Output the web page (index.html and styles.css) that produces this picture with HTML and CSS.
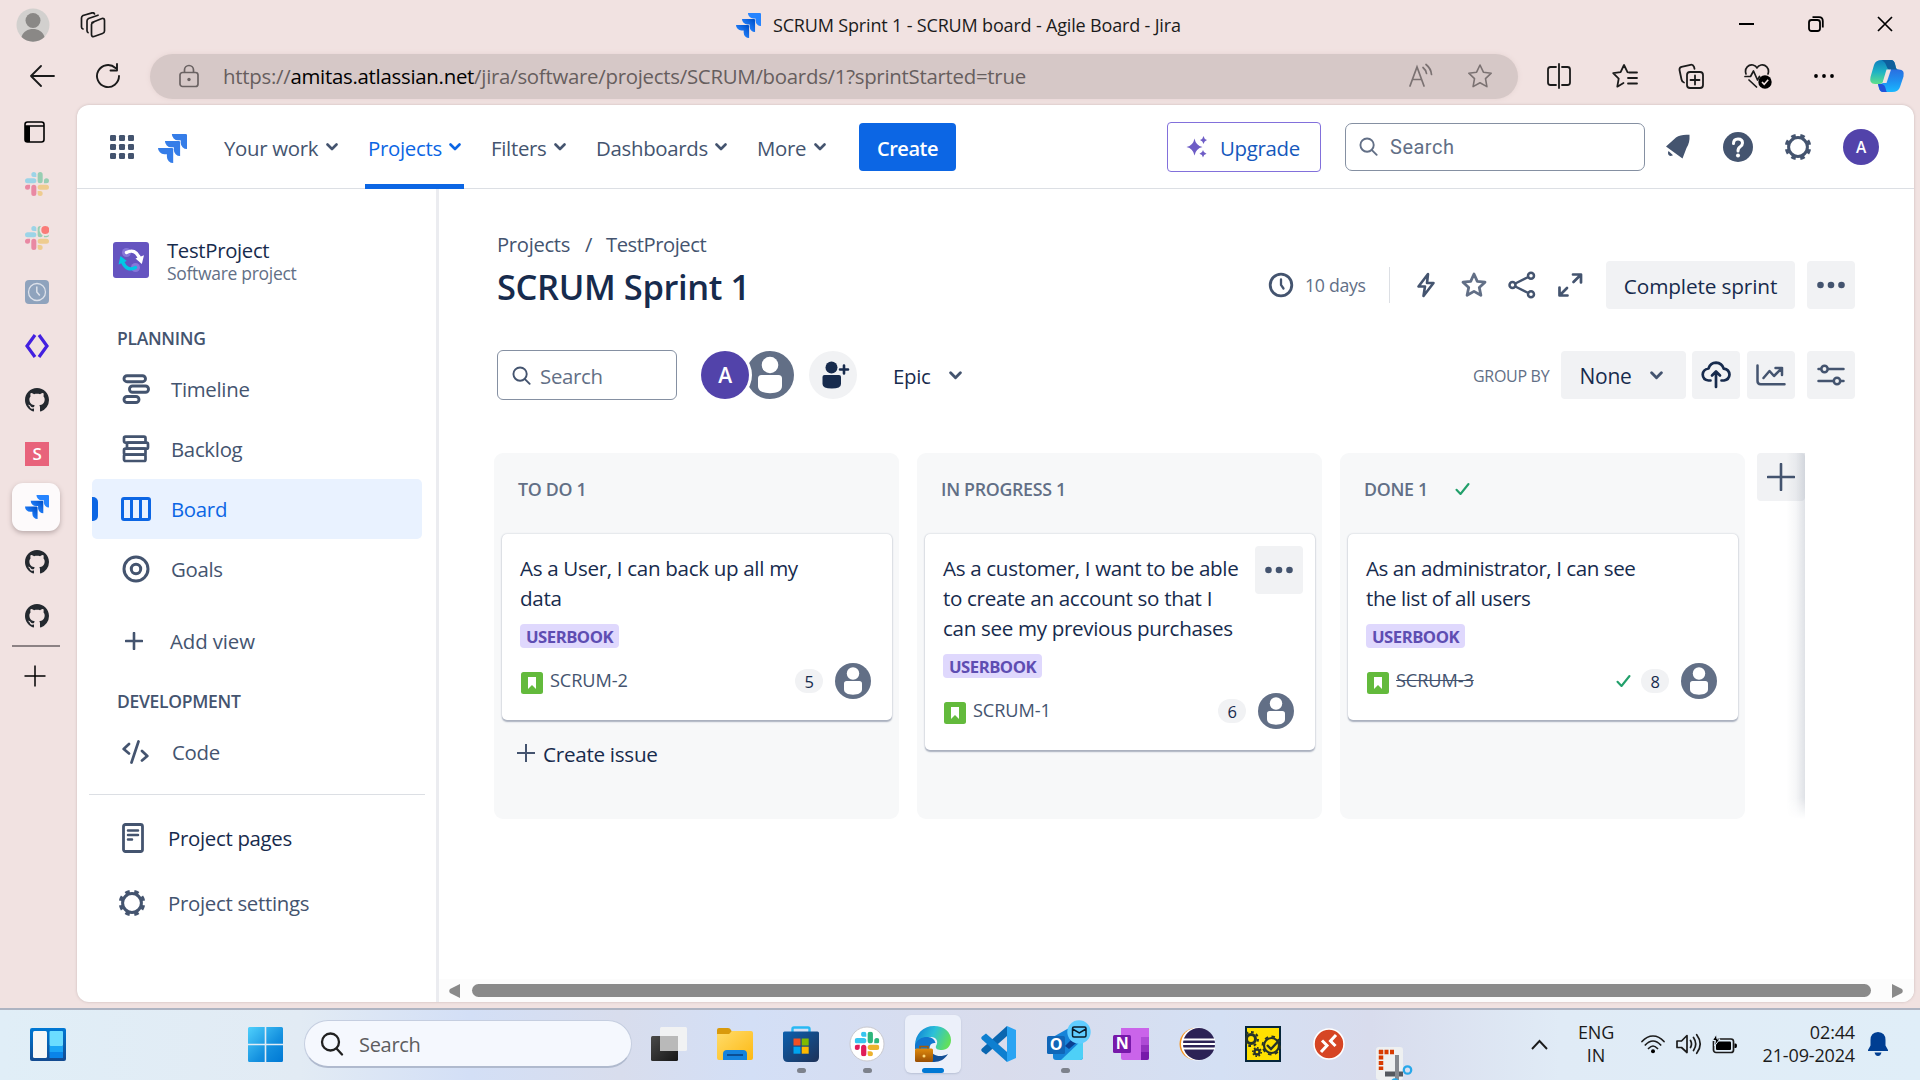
FILE: index.html
```html
<!DOCTYPE html>
<html lang="en">
<head>
<meta charset="utf-8">
<title>SCRUM Sprint 1 - SCRUM board - Agile Board - Jira</title>
<link rel="stylesheet" href="styles.css">
</head>
<body>
<svg class="defs" width="0" height="0" aria-hidden="true">
  <defs>
    <linearGradient id="gJira" x1="1" y1="0" x2="0" y2="1"><stop offset="0.3" stop-color="#2684ff"/><stop offset="1" stop-color="#2684ff"/></linearGradient>
    <linearGradient id="gJiraDark" x1="1" y1="0" x2="0" y2="1"><stop offset="0.1" stop-color="#0052cc"/><stop offset="0.7" stop-color="#2684ff"/></linearGradient>
    <linearGradient id="gWin" x1="0" y1="0" x2="1" y2="1"><stop offset="0" stop-color="#4fd0fc"/><stop offset="0.6" stop-color="#1490df"/><stop offset="1" stop-color="#0078d4"/></linearGradient>
    <linearGradient id="gCopA" x1="0" y1="0" x2="0" y2="1"><stop offset="0" stop-color="#0f7fbd"/><stop offset="0.5" stop-color="#1fb3c4"/><stop offset="1" stop-color="#5fe08a"/></linearGradient>
    <linearGradient id="gCopB" x1="0" y1="0" x2="0" y2="1"><stop offset="0" stop-color="#2a6fe0"/><stop offset="0.5" stop-color="#1f8ff0"/><stop offset="1" stop-color="#19b8ff"/></linearGradient>
    <linearGradient id="gFold" x1="0" y1="0" x2="1" y2="1"><stop offset="0" stop-color="#ffdc6b"/><stop offset="1" stop-color="#fdb913"/></linearGradient>
    <linearGradient id="gStore" x1="0" y1="0" x2="1" y2="1"><stop offset="0" stop-color="#0b5fae"/><stop offset="1" stop-color="#1f3258"/></linearGradient>
    <linearGradient id="gEdge" x1="0" y1="0.2" x2="1" y2="0.5"><stop offset="0" stop-color="#0f7fd6"/><stop offset="0.5" stop-color="#2cc0d8"/><stop offset="1" stop-color="#62e05a"/></linearGradient>
    <linearGradient id="gBag" x1="0" y1="0" x2="0" y2="1"><stop offset="0" stop-color="#e08a0c"/><stop offset="1" stop-color="#9a4f04"/></linearGradient>
    <linearGradient id="gDark" x1="0" y1="0" x2="1" y2="1"><stop offset="0" stop-color="#4a4a4a"/><stop offset="1" stop-color="#161616"/></linearGradient>
    <linearGradient id="gWidget" x1="0" y1="0" x2="0" y2="1"><stop offset="0" stop-color="#0078d4"/><stop offset="1" stop-color="#134a90"/></linearGradient>
  </defs>
  <symbol id="jira" viewBox="0 0 24 24">
    <path fill="url(#gJiraDark)" d="M11.571 11.513H0a5.218 5.218 0 0 0 5.232 5.215h2.13v2.057A5.215 5.215 0 0 0 12.575 24V12.518a1.005 1.005 0 0 0-1.005-1.005z"/>
    <path fill="url(#gJiraDark)" d="M17.294 5.757H5.736a5.215 5.215 0 0 0 5.215 5.214h2.129v2.058a5.218 5.218 0 0 0 5.215 5.214V6.758a1.001 1.001 0 0 0-1.001-1.001z"/>
    <path fill="url(#gJira)" d="M23.013 0H11.455a5.215 5.215 0 0 0 5.215 5.215h2.129v2.057A5.215 5.215 0 0 0 24 12.483V1.005A1.001 1.001 0 0 0 23.013 0Z"/>
  </symbol>
  <symbol id="jira-flat" viewBox="0 0 24 24">
    <path fill="#357de8" d="M11.571 11.513H0a5.218 5.218 0 0 0 5.232 5.215h2.13v2.057A5.215 5.215 0 0 0 12.575 24V12.518a1.005 1.005 0 0 0-1.005-1.005zm5.723-5.756H5.736a5.215 5.215 0 0 0 5.215 5.214h2.129v2.058a5.218 5.218 0 0 0 5.215 5.214V6.758a1.001 1.001 0 0 0-1.001-1.001zM23.013 0H11.455a5.215 5.215 0 0 0 5.215 5.215h2.129v2.057A5.215 5.215 0 0 0 24 12.483V1.005A1.001 1.001 0 0 0 23.013 0Z"/>
  </symbol>
  <symbol id="slack" viewBox="0 0 24 24">
    <path fill="#e01e5a" d="M5.042 15.165a2.528 2.528 0 0 1-2.52 2.523A2.528 2.528 0 0 1 0 15.165a2.527 2.527 0 0 1 2.522-2.52h2.52v2.52zM6.313 15.165a2.527 2.527 0 0 1 2.521-2.52 2.527 2.527 0 0 1 2.521 2.52v6.313A2.528 2.528 0 0 1 8.834 24a2.528 2.528 0 0 1-2.521-2.522v-6.313z"/>
    <path fill="#36c5f0" d="M8.834 5.042a2.528 2.528 0 0 1-2.521-2.52A2.528 2.528 0 0 1 8.834 0a2.528 2.528 0 0 1 2.521 2.522v2.52H8.834zM8.834 6.313a2.528 2.528 0 0 1 2.521 2.521 2.528 2.528 0 0 1-2.521 2.521H2.522A2.528 2.528 0 0 1 0 8.834a2.528 2.528 0 0 1 2.522-2.521h6.312z"/>
    <path fill="#2eb67d" d="M18.956 8.834a2.528 2.528 0 0 1 2.522-2.521A2.528 2.528 0 0 1 24 8.834a2.528 2.528 0 0 1-2.522 2.521h-2.522V8.834zM17.688 8.834a2.528 2.528 0 0 1-2.523 2.521 2.527 2.527 0 0 1-2.52-2.521V2.522A2.527 2.527 0 0 1 15.165 0a2.528 2.528 0 0 1 2.523 2.522v6.312z"/>
    <path fill="#ecb22e" d="M15.165 18.956a2.528 2.528 0 0 1 2.523 2.522A2.528 2.528 0 0 1 15.165 24a2.527 2.527 0 0 1-2.52-2.522v-2.522h2.52zM15.165 17.688a2.527 2.527 0 0 1-2.52-2.523 2.526 2.526 0 0 1 2.52-2.52h6.313A2.527 2.527 0 0 1 24 15.165a2.528 2.528 0 0 1-2.522 2.523h-6.313z"/>
  </symbol>
  <symbol id="github" viewBox="0 0 16 16">
    <path fill="#24292f" d="M8 0C3.58 0 0 3.58 0 8c0 3.54 2.29 6.53 5.47 7.59.4.07.55-.17.55-.38 0-.19-.01-.82-.01-1.49-2.01.37-2.53-.49-2.69-.94-.09-.23-.48-.94-.82-1.13-.28-.15-.68-.52-.01-.53.63-.01 1.08.58 1.23.82.72 1.21 1.87.87 2.33.66.07-.52.28-.87.51-1.07-1.78-.2-3.64-.89-3.64-3.95 0-.87.31-1.59.82-2.15-.08-.2-.36-1.02.08-2.12 0 0 .67-.21 2.2.82.64-.18 1.32-.27 2-.27s1.36.09 2 .27c1.53-1.04 2.2-.82 2.2-.82.44 1.1.16 1.92.08 2.12.51.56.82 1.27.82 2.15 0 3.07-1.87 3.75-3.65 3.95.29.25.54.73.54 1.48 0 1.07-.01 1.93-.01 2.2 0 .21.15.46.55.38A8.01 8.01 0 0 0 16 8c0-4.42-3.58-8-8-8z"/>
  </symbol>
  <symbol id="chev" viewBox="0 0 12 8"><path d="M1.5 1.5 6 6l4.5-4.5" fill="none" stroke="currentColor" stroke-width="2.6" stroke-linecap="round" stroke-linejoin="round"/></symbol>
  <symbol id="search" viewBox="0 0 20 20"><g fill="none" stroke="currentColor" stroke-width="2" stroke-linecap="round"><circle cx="8.5" cy="8.5" r="7"/><path d="m13.6 13.8 5 5"/></g></symbol>
  <symbol id="gear" viewBox="0 0 28 28"><g fill="none" stroke="currentColor"><circle cx="14" cy="14" r="9.4" stroke-width="3"/><circle cx="14" cy="14" r="11.8" stroke-width="3" pathLength="80" stroke-dasharray="5 5" transform="rotate(11.25 14 14)"/></g></symbol>
  <symbol id="person" viewBox="0 0 48 48"><circle cx="24" cy="24" r="24" fill="#626f86"/><circle cx="24" cy="14" r="8.3" fill="#fff"/><path d="M12 27.5a3.5 3.5 0 0 1 3.5-3.5h17a3.5 3.5 0 0 1 3.5 3.5V35c0 5-5 7.200-12 7.200S12 40 12 35z" fill="#fff"/></symbol>
  <symbol id="dots" viewBox="0 0 28 8"><g fill="currentColor"><circle cx="3.500" cy="4" r="3.300"/><circle cx="14" cy="4" r="3.300"/><circle cx="24.500" cy="4" r="3.300"/></g></symbol>
  <symbol id="check" viewBox="0 0 16 14"><path d="m2 7.800 4 4.200 8-10" fill="none" stroke="#22a06b" stroke-width="2.100" stroke-linecap="round" stroke-linejoin="round"/></symbol>
  <symbol id="story" viewBox="0 0 22 22"><rect width="22" height="22" rx="2.500" fill="#63ba3c"/><path d="M7 5h8v12l-4-4-4 4z" fill="#fff"/></symbol>
</svg>

<div class="titlebar">
  <svg class="user" width="34" height="34" viewBox="0 0 34 34"><circle cx="17" cy="17" r="16.500" fill="#d2d0ce"/><circle cx="17" cy="12.500" r="7.500" fill="#8a8886"/><path d="M5.500 29C7 23.500 12 21 17 21s10 2.500 11.500 8A16.500 16.500 0 0 1 5.500 29z" fill="#8a8886"/></svg>
  <svg class="workspaces" width="26" height="26" viewBox="0 0 26 26"><g fill="none" stroke="#1b1b1b" stroke-width="1.700" stroke-linejoin="round" stroke-linecap="round"><path d="M12 10.500 22 6.500q2.500-.5 2.500 2V19q0 2-2 2.500L14 24.500q-2.500.5-2.500-2V12.500q0-1.500 2-2z"/><path d="M8 20.500q-1-.5-1-2V9q0-1.500 1.500-2.500L18 3.200"/><path d="M3 17q-1.500-.5-1.500-2V6q0-1.500 1.500-2.500L12 .9q2-.5 2.500 1"/></g></svg>
  <div class="title"><svg width="25" height="25"><use href="#jira"/></svg><span>SCRUM Sprint 1 - SCRUM board - Agile Board - Jira</span></div>
  <div class="winctl">
    <svg width="16" height="16" viewBox="0 0 16 16"><path d="M0 8h15" stroke="#000" stroke-width="2"/></svg>
    <svg width="16" height="16" viewBox="0 0 16 16"><g fill="none" stroke="#000" stroke-width="1.800"><rect x="1" y="4" width="11" height="11" rx="2.500"/><path d="M4.500 1.200H11Q14.800 1.200 14.800 5v6.500"/></g></svg>
    <svg width="16" height="16" viewBox="0 0 16 16"><path d="m1 1 14 14M15 1 1 15" stroke="#000" stroke-width="1.700"/></svg>
  </div>
</div>

<div class="addressbar">
  <svg class="back" width="26" height="22" viewBox="0 0 26 22"><path d="M25 11H2M12 1 2 11l10 10" fill="none" stroke="#1b1b1b" stroke-width="1.800" stroke-linecap="round" stroke-linejoin="round"/></svg>
  <svg class="reload" width="26" height="26" viewBox="0 0 26 26"><path d="M24 13a11 11 0 1 1-3.500-8M22 1v6.500h-6.500" fill="none" stroke="#1b1b1b" stroke-width="1.900" stroke-linecap="round" stroke-linejoin="round"/></svg>
  <div class="omnibox">
    <svg class="lock" width="20" height="24" viewBox="0 0 20 24"><g fill="none" stroke="#6b6363" stroke-width="1.700"><rect x="1" y="8.500" width="18" height="14" rx="2.500"/><path d="M5.500 8.500V6a4.500 4.500 0 0 1 9 0v2.500"/></g><circle cx="10" cy="15.500" r="1.700" fill="#6b6363"/></svg>
    <span class="url">https://<b>amitas.atlassian.net</b>/jira/software/projects/SCRUM/boards/1?sprintStarted=true</span>
    <svg class="aloud" width="26" height="26" viewBox="0 0 26 26"><g fill="none" stroke="#7b7272" stroke-width="1.700" stroke-linecap="round"><path d="M2 23 9 4l7 19M4.500 16.500h9"/><path d="M15 4.500q3 2.500 3.500 6M18 1.500q5 4 5.500 10"/></g></svg>
    <svg class="fav" width="26" height="26" viewBox="0 0 26 26"><path d="m13 2 3.400 7.200 7.800 1-5.700 5.500 1.400 7.900L13 19.800l-6.900 3.800 1.400-7.900-5.700-5.500 7.800-1z" fill="none" stroke="#7b7272" stroke-width="1.600" stroke-linejoin="round"/></svg>
  </div>
  <div class="tools">
    <svg width="26" height="26" viewBox="0 0 26 26"><g fill="none" stroke="#1b1b1b" stroke-width="1.800" stroke-linecap="round"><path d="M10 4H4.500Q2 4 2 6.500v13Q2 22 4.500 22H10M16 4h5.500Q24 4 24 6.500v13q0 2.500-2.500 2.500H16M13 1v24"/></g></svg>
    <svg width="26" height="26" viewBox="0 0 26 26"><g fill="none" stroke="#1b1b1b" stroke-width="1.800" stroke-linecap="round" stroke-linejoin="round"><path d="M15.500 9.200 12 2 8.600 9.200l-7.400 1 5.500 5.500-1.400 8L11.500 20M17 9.500h8M16 15h9M16 20.500h9"/></g></svg>
    <svg width="26" height="26" viewBox="0 0 26 26"><g fill="none" stroke="#1b1b1b" stroke-width="1.800" stroke-linecap="round" stroke-linejoin="round"><rect x="9" y="9" width="16" height="16" rx="3"/><path d="M17 12.500v9M12.500 17h9M6 19.500q-2-.5-2.500-3L1.500 7q-.3-2.500 2-3.200l9-2q2.500-.5 3.500 2l.5 2"/></g></svg>
    <svg width="28" height="26" viewBox="0 0 28 26"><g fill="none" stroke="#1b1b1b" stroke-width="1.700" stroke-linecap="round" stroke-linejoin="round"><path d="M2 11C0 5 5 1 9 2q3 .7 4 3 1-2.300 4-3c4-1 9 3 7 9M1 13.500h5.500l3-5.500 4 9 2-3.500M5 17l7.500 7"/></g><circle cx="21" cy="19" r="6.700"/><path d="m18 19 2.200 2.300 4-4.500" fill="none" stroke="#f1e2e1" stroke-width="1.600"/></svg>
    <svg width="22" height="6" viewBox="0 0 22 6"><circle cx="3" cy="3" r="1.900"/><circle cx="11" cy="3" r="1.900"/><circle cx="19" cy="3" r="1.900"/></svg>
    <svg width="36" height="34" viewBox="0 0 36 34"><path d="M13 1h9q3 0 4 4l1 4q.600 2 3 2h-9q-2.500 0-3.500 3l-3 8q-1 3-4 3H6q-6 0-4.500-7L5 6q1.500-5 8-5z" fill="url(#gCopA)"/><path d="M13 1h9q3 0 4 4l1 4q.600 2 3 2h-9q-2.500-.5-3.500-4T13 1z" fill="#0e5f9c"/><path d="M23 33h-9q-3 0-4-4l-1-4h3q2 0 3-3l3.500-9q1-2.500 3.500-2.500h8q6 0 4.500 7L31 28q-1.500 5-8 5z" fill="url(#gCopB)"/><path d="M18 33h-4q-3 0-4-4l-1-4h4q3 1 3.500 4t1.500 4z" fill="#2352d8"/><path d="M17.500 10.500h4.500l-4.500 13.500h-4z" fill="#f1e2e1"/></svg>
  </div>
</div>

<div class="middle">
  <div class="tabs">
    <div class="tab top"><svg width="21" height="22" viewBox="0 0 21 22"><rect x="1" y="1" width="19" height="20" rx="2.500" fill="none" stroke="#000" stroke-width="1.600"/><path d="M1 5h5v16H3q-2 0-2-2zM1 4.300h19v1.400H1z"/></svg></div>
    <div class="tab"><svg class="dim" width="24" height="24"><use href="#slack"/></svg></div>
    <div class="tab"><svg width="24" height="24"><use class="dim" href="#slack"/><circle cx="20.500" cy="4" r="6" fill="#f1e2e1"/><circle cx="20.300" cy="4" r="4" fill="#fa7b78"/></svg></div>
    <div class="tab"><svg width="24" height="24" viewBox="0 0 24 24"><rect width="24" height="24" rx="4" fill="#8fa3bd"/><circle cx="12" cy="12" r="8.500" fill="none" stroke="#dde1ea" stroke-width="1.300"/><path d="M11.800 6.500V12l3 3.500" fill="none" stroke="#dde1ea" stroke-width="1.500"/></svg></div>
    <div class="tab"><svg width="24" height="24" viewBox="0 0 24 24"><path d="M10 1 2 12l8 11M14 1l8 11-8 11" fill="none" stroke="#4320e0" stroke-width="3.200"/></svg></div>
    <div class="tab"><svg width="24" height="24"><use href="#github"/></svg></div>
    <div class="tab"><span class="s-tile">S</span></div>
    <div class="tab"><span class="active-tile"><svg width="24" height="24"><use href="#jira"/></svg></span></div>
    <div class="tab"><svg width="24" height="24"><use href="#github"/></svg></div>
    <div class="tab"><svg width="24" height="24"><use href="#github"/></svg></div>
    <div class="tabs-line"></div>
    <svg class="newtab" width="22" height="22" viewBox="0 0 22 22"><path d="M11 .5v21M.5 11h21" stroke="#000" stroke-width="1.500"/></svg>
  </div>

  <div class="page">
    <header class="nav">
      <svg class="grid" width="24" height="24" viewBox="0 0 24 24"><g fill="#44546f"><rect width="6" height="6" rx="1.300"/><rect x="9" width="6" height="6" rx="1.300"/><rect x="18" width="6" height="6" rx="1.300"/><rect y="9" width="6" height="6" rx="1.300"/><rect x="9" y="9" width="6" height="6" rx="1.300"/><rect x="18" y="9" width="6" height="6" rx="1.300"/><rect y="18" width="6" height="6" rx="1.300"/><rect x="9" y="18" width="6" height="6" rx="1.300"/><rect x="18" y="18" width="6" height="6" rx="1.300"/></g></svg>
      <svg class="logo" width="29" height="29"><use href="#jira-flat"/></svg>
      <nav class="menu">
        <a class="w1">Your work<svg width="12" height="8"><use href="#chev"/></svg></a>
        <a class="w2 current">Projects<svg width="12" height="8"><use href="#chev"/></svg></a>
        <a class="w3">Filters<svg width="12" height="8"><use href="#chev"/></svg></a>
        <a class="w4">Dashboards<svg width="12" height="8"><use href="#chev"/></svg></a>
        <a class="w5">More<svg width="12" height="8"><use href="#chev"/></svg></a>
      </nav>
      <button class="create">Create</button>
      <div class="nav-right">
        <button class="upgrade"><svg width="22" height="22" viewBox="0 0 22 22"><g fill="#6e5dc6"><path d="M8.500 2.500q1.300 7 8 8.500-6.700 1.500-8 8.500Q7.200 12.500.5 11q6.700-1.500 8-8.500z"/><path d="M17.500 0q.6 3.200 3.500 4-2.900.8-3.500 4-.6-3.200-3.500-4 2.900-.8 3.500-4zM17 14q.5 3 3.500 3.700-3 .8-3.500 3.800-.5-3-3.500-3.800 3-.7 3.500-3.700z"/></g></svg>Upgrade</button>
        <div class="searchbox"><svg width="19" height="19"><use href="#search"/></svg>Search</div>
        <svg class="bell" width="26" height="26" viewBox="0 0 26 26"><path d="M11 3.500Q16 0 24.500.8 25 9 21.500 14L17.500 24.500 1 12.500z" fill="#44546f"/><path d="m3.500 17 4.500 4.200Q4.500 23 3.300 20.500 2.500 18.500 3.500 17z" fill="#44546f"/></svg>
        <svg class="help" width="30" height="30" viewBox="0 0 30 30"><circle cx="15" cy="15" r="15" fill="#44546f"/><path d="M10.500 11.500Q10.500 7 15 7t4.500 4q0 2.300-2.300 3.700Q15 16 15 19" fill="none" stroke="#fff" stroke-width="3" stroke-linecap="round"/><circle cx="15" cy="23.500" r="2" fill="#fff"/></svg>
        <svg class="cog" width="28" height="28"><use href="#gear"/></svg>
        <span class="avatar small">A</span>
      </div>
    </header>

    <div class="body">
      <aside class="side">
        <div class="project">
          <svg width="36" height="36" viewBox="0 0 36 36"><rect width="36" height="36" rx="3" fill="#6554c0"/><circle cx="13.500" cy="10.500" r="4.500" fill="#8777d9"/><circle cx="22.500" cy="25.500" r="4.500" fill="#8777d9"/><path d="M13.500 10.500Q22 6 26.500 16" fill="none" stroke="#fff" stroke-width="3.400" stroke-linecap="round"/><path d="m22.500 16.500 8.500-3.200-2.200 8.700z" fill="#fff"/><path d="M22.500 25.500Q14 30 9.500 20" fill="none" stroke="#00c7e6" stroke-width="3.400" stroke-linecap="round"/><path d="M13.800 19 5.500 22.500 7.500 14z" fill="#00c7e6"/></svg>
          <div class="names"><strong>TestProject</strong><span>Software project</span></div>
        </div>
        <h4>PLANNING</h4>
        <a class="row"><svg width="28" height="30" viewBox="0 0 28 30"><g fill="none" stroke="#44546f" stroke-width="2.900"><rect x="2" y="1.700" width="21.500" height="6" rx="3"/><rect x="7.500" y="12" width="19" height="6.300" rx="3"/><rect x="2" y="22.500" width="15" height="6" rx="3"/></g></svg>Timeline</a>
        <a class="row"><svg width="28" height="28" viewBox="0 0 28 28"><g fill="none" stroke="#44546f" stroke-width="2.700"><rect x="2" y="1.700" width="21.500" height="6" rx="1.500"/><rect x="5" y="7.700" width="21" height="6" rx="1.500"/><rect x="2" y="13.700" width="21.500" height="6" rx="1.500"/><rect x="2" y="19.700" width="21.500" height="6.300" rx="1.500"/></g></svg>Backlog</a>
        <a class="row selected"><svg width="30" height="24" viewBox="0 0 30 24"><g fill="none" stroke="#0c66e4" stroke-width="3"><rect x="1.500" y="1.500" width="27" height="21" rx="1.500"/><path d="M10.500 1v22M19.500 1v22"/></g></svg>Board</a>
        <a class="row"><svg width="28" height="28" viewBox="0 0 28 28"><g fill="none" stroke="#44546f" stroke-width="3"><circle cx="14" cy="14" r="12"/><circle cx="14" cy="14" r="4.700"/></g></svg>Goals</a>
        <a class="row add"><svg width="18" height="18" viewBox="0 0 18 18"><path d="M9 1v16M1 9h16" stroke="#44546f" stroke-width="2.600" stroke-linecap="round"/></svg>Add view</a>
        <h4 class="dev">DEVELOPMENT</h4>
        <a class="row code"><svg width="27" height="24" viewBox="0 0 27 24"><g fill="none" stroke="#44546f" stroke-width="2.700" stroke-linecap="round" stroke-linejoin="round"><path d="M7 4 1.700 9 7 13.500M20 11l5.300 5L20 20.500M16.500 1.500 9.500 22.500"/></g></svg>Code</a>
        <div class="side-line"></div>
        <a class="row pages"><svg width="22" height="30" viewBox="0 0 22 30"><rect x="1.500" y="1.500" width="19" height="27" rx="2" fill="none" stroke="#44546f" stroke-width="2.800"/><path d="M6 7.500h10M6 12h10M6 16.500h4" stroke="#44546f" stroke-width="2.500" stroke-linecap="round"/></svg>Project pages</a>
        <a class="row settings"><svg width="28" height="28"><use href="#gear"/></svg>Project settings</a>
      </aside>

      <main class="main">
        <div class="crumbs"><span class="c1">Projects</span><span class="c2">/</span><span>TestProject</span></div>
        <div class="headrow">
          <h1>SCRUM Sprint 1</h1>
          <div class="actions">
            <svg width="26" height="26" viewBox="0 0 26 26"><g fill="none" stroke="#44546f" stroke-width="2.800" stroke-linecap="round"><circle cx="13" cy="13" r="10.800"/><path d="M13 7.500V13l2.500 3.500" stroke-width="2.300"/></g></svg>
            <span class="days">10 days</span>
            <i class="vline"></i>
            <svg class="a1" width="20" height="26" viewBox="0 0 20 26"><path d="M12 2 2.500 14.500H9L7.500 24 17.500 11H11z" fill="none" stroke="#44546f" stroke-width="2.600" stroke-linejoin="round"/></svg>
            <svg class="a2" width="28" height="28" viewBox="0 0 28 28"><path d="m14 3 3.300 7.300 7.700.9-5.700 5.300 1.600 7.800L14 20.400l-6.900 3.900 1.600-7.800L3 11.200l7.700-.9z" fill="none" stroke="#626f86" stroke-width="2.800" stroke-linejoin="round"/></svg>
            <svg class="a3" width="28" height="28" viewBox="0 0 28 28"><g fill="none" stroke="#44546f" stroke-width="2.500"><circle cx="4.500" cy="14" r="3"/><circle cx="23" cy="4.800" r="3"/><circle cx="23" cy="23.200" r="3"/><path d="m7.300 12.500 13-6.500M7.300 15.500l13 6.500"/></g></svg>
            <svg class="a4" width="26" height="26" viewBox="0 0 26 26"><g fill="none" stroke="#44546f" stroke-width="2.700" stroke-linecap="round" stroke-linejoin="round"><path d="M16 2.500h8v8M23 3.500 16.500 10M10.500 23.500h-8v-8M3.500 22.500 10 16"/></g></svg>
            <button class="btn complete">Complete sprint</button>
            <button class="btn sq dk2"><svg width="28" height="8"><use href="#dots"/></svg></button>
          </div>
        </div>
        <div class="filters">
          <div class="fsearch"><svg width="19" height="19"><use href="#search"/></svg>Search</div>
          <div class="people">
            <span class="avatar big">A</span>
            <svg class="p2" width="48" height="48"><use href="#person"/></svg>
            <svg class="p3" width="48" height="48" viewBox="0 0 48 48"><circle cx="24" cy="24" r="24" fill="#f1f2f4"/><g fill="#172b4d"><circle cx="22.500" cy="16.500" r="6"/><path d="M13.500 26q0-2 2-2H30q2 0 2 2v7q0 4.500-9.200 4.500T13.500 33z"/></g><path d="M35 14.500v8M31 18.500h8" stroke="#172b4d" stroke-width="2.600" stroke-linecap="round"/></svg>
          </div>
          <span class="epic">Epic</span><svg class="epic-c" width="13" height="9"><use href="#chev"/></svg>
          <div class="fright">
            <span class="group">GROUP BY</span>
            <button class="btn none">None<svg width="13" height="9"><use href="#chev"/></svg></button>
            <button class="btn sq m1"><svg width="30" height="28" viewBox="0 0 30 28"><path d="M9.500 19.500H7.500Q2 19 1.700 13.500 2 8.500 7.500 7.500 9.500 1.700 15 1.700q6 .3 7.700 6 5.500.8 5.800 6-.3 5-5.500 5.800h-2.500M15 26V11M11 14.500l4-4 4 4" fill="none" stroke="#172b4d" stroke-width="2.700" stroke-linecap="round" stroke-linejoin="round"/></svg></button>
            <button class="btn sq m2"><svg width="30" height="22" viewBox="0 0 30 22"><path d="M1.500 1.500V17q0 3.200 3.200 3.200H28.500M7.500 14l6-7 4.500 5 8-8M19.500 4h6.500v7" fill="none" stroke="#44546f" stroke-width="2.500" stroke-linecap="round" stroke-linejoin="round"/></svg></button>
            <button class="btn sq m3"><svg width="28" height="22" viewBox="0 0 28 22"><g fill="none" stroke="#44546f" stroke-width="2.500" stroke-linecap="round"><path d="M1.500 5H4M11 5h15.500M1.500 17H16.500M23.500 17h3"/><circle cx="7.500" cy="5" r="3.200"/><circle cx="20" cy="17" r="3.200"/></g></svg></button>
          </div>
        </div>

        <div class="board">
          <section class="col">
            <h3>TO DO 1</h3>
            <article class="card">
              <p>As a User, I can back up all my<br>data</p>
              <span class="tag">USERBOOK</span>
              <div class="foot"><svg class="st" width="22" height="22"><use href="#story"/></svg><span class="key">SCRUM-2</span><span class="pts">5</span><svg width="36" height="36"><use href="#person"/></svg></div>
            </article>
            <div class="newissue"><svg width="18" height="18" viewBox="0 0 18 18"><path d="M9 0v18M0 9h18" stroke="#44546f" stroke-width="2"/></svg>Create issue</div>
          </section>
          <section class="col">
            <h3>IN PROGRESS 1</h3>
            <article class="card">
              <button class="btn sq more"><svg width="28" height="8"><use href="#dots"/></svg></button>
              <p>As a customer, I want to be able<br>to create an account so that I<br>can see my previous purchases</p>
              <span class="tag">USERBOOK</span>
              <div class="foot"><svg class="st" width="22" height="22"><use href="#story"/></svg><span class="key">SCRUM-1</span><span class="pts">6</span><svg width="36" height="36"><use href="#person"/></svg></div>
            </article>
          </section>
          <section class="col">
            <h3>DONE 1<svg width="17" height="14"><use href="#check"/></svg></h3>
            <article class="card">
              <p class="tight">As an administrator, I can see<br>the list of all users</p>
              <span class="tag">USERBOOK</span>
              <div class="foot"><svg class="st" width="22" height="22"><use href="#story"/></svg><span class="key done">SCRUM-3</span><svg class="ok" width="17" height="14"><use href="#check"/></svg><span class="pts">8</span><svg width="36" height="36"><use href="#person"/></svg></div>
            </article>
          </section>
          <button class="btn sq addcol"><svg width="28" height="28" viewBox="0 0 28 28"><path d="M14 1v26M1 14h26" stroke="#44546f" stroke-width="2.600" stroke-linecap="round"/></svg></button>
          <div class="fade"></div>
        </div>

        <div class="scroll">
          <svg width="11" height="14" viewBox="0 0 11 14"><path d="M11 0v14L1 9Q-.5 7 1 5z" fill="#8a8a8a"/></svg>
          <div class="thumb"></div>
          <svg width="11" height="14" viewBox="0 0 11 14"><path d="M0 0v14l10-5q1.500-2 0-4z" fill="#8a8a8a"/></svg>
        </div>
      </main>
    </div>
  </div>
</div>

<footer class="taskbar">
  <svg class="widgets" width="36" height="33" viewBox="0 0 36 33"><rect width="36" height="33" rx="2" fill="url(#gWidget)"/><rect x="3" y="3" width="14" height="27" rx="1.500" fill="#f7f7f7"/><rect x="19.500" y="3" width="13.500" height="15" rx="1" fill="#6bdcff"/><path d="M19.500 18H33v6H19.500z" fill="#1ba5f5"/><path d="M19.500 24H33v6H19.500z" fill="#0a84e8"/></svg>
  <svg class="start" width="35" height="35" viewBox="0 0 35 35"><path fill="url(#gWin)" d="M1.500 0h15.200v16.700H0V1.500Q0 0 1.500 0zM18.300 0h15.200Q35 0 35 1.500v15.200H18.300zM0 18.300h16.700V35H1.500Q0 35 0 33.500zM18.300 18.300H35v15.200q0 1.500-1.500 1.500H18.300z"/></svg>
  <div class="tsearch"><svg width="24" height="24" viewBox="0 0 24 24"><g fill="none" stroke="#202020" stroke-width="2.300" stroke-linecap="round"><circle cx="10.500" cy="10" r="8.500"/><path d="m16.500 16.500 5.500 6"/></g></svg>Search</div>
  <div class="apps">
    <div class="app"><svg width="36" height="36" viewBox="0 0 36 36"><rect y="10" width="27" height="25" rx="1.500" fill="url(#gDark)"/><rect x="9" y="1" width="27" height="24" rx="1.500" fill="#f3f3f3" opacity=".93"/><path d="M9 10h18v15H9z" fill="#b9b9b9"/></svg></div>
    <div class="app"><svg width="36" height="36" viewBox="0 0 36 36"><path d="M0 4q0-2 2-2h9q2 0 3 2l1 2v6H0z" fill="#d99a0c"/><path d="M0 8h12l3-3h19q2 0 2 2v25q0 2-2 2H2q-2 0-2-2z" fill="url(#gFold)"/><path d="M6 34v-6q0-4 4-4h16q4 0 4 4v6z" fill="#1583dd"/><path d="M10 29h16" stroke="#0b4e94" stroke-width="2"/></svg></div>
    <div class="app on"><svg width="36" height="36" viewBox="0 0 36 36"><path d="M9.500 6V3q0-1.500 1.500-1.500h14q1.500 0 1.500 1.500v3" fill="none" stroke="#28b9f4" stroke-width="2.400"/><path d="M0 7q0-1.500 1.500-1.500h33Q36 5.500 36 7v24q0 5-5 5H5q-5 0-5-5z" fill="url(#gStore)"/><path d="M10.500 12.500h7v7h-7z" fill="#f25022"/><path d="M18.700 12.500h7v7h-7z" fill="#7fba00"/><path d="M10.500 20.700h7v7h-7z" fill="#00a4ef"/><path d="M18.700 20.700h7v7h-7z" fill="#ffb900"/></svg></div>
    <div class="app on"><svg width="36" height="36" viewBox="0 0 36 36"><circle cx="18" cy="18" r="17" fill="#fff" stroke="#c9c9cf" stroke-width="1"/><svg x="5.500" y="5.500" width="25" height="25"><use href="#slack"/></svg></svg></div>
    <div class="app active"><svg width="38" height="36" viewBox="0 0 38 36"><path d="M1 20C1 8 9 0 20 0c10 0 17 6 17 14 0 6-4 10-9 10-4 0-7-1-6-4 3-5 0-9-5-9-7 0-13 4-16 9z" fill="url(#gEdge)"/><path d="M1 19C3 13 9 10.500 14 11q6 .500 7.500 6-6-1-6 6H1z" fill="#1176cf"/><path d="M16 23c2 7 10 9 18 5-3 5-8 8-14 8h-3z" fill="#134f96"/><rect x="1" y="22.500" width="18" height="13.500" rx="1.500" fill="url(#gBag)"/><path d="M6 22.500v-2h8v2" fill="none" stroke="#a35a06" stroke-width="1.600"/><circle cx="10" cy="30" r="1.500" fill="#ffd977"/></svg></div>
    <div class="app"><svg width="36" height="36" viewBox="0 0 36 36"><path d="M26 0 35 4v28l-9 4z" fill="#2aa4f3"/><path d="M26 0v10L5 28.500 1 25.500q-1.500-1.500 0-3z" fill="#0a66b0"/><path d="M26 36V26L5 7.500 1 10.500q-1.500 1.500 0 3z" fill="#0e7fd0"/></svg></div>
    <div class="app on"><svg class="outlook" width="44" height="42" viewBox="0 0 44 42"><path d="M6 17 22 8l14 9v20q0 3-3 3H9q-3 0-3-3z" fill="#1583d8"/><path d="M36 19v18q0 3-3 3H14z" fill="#4ed0f7"/><path d="M18 26 30 14l5 4-13 11z" fill="#0b3f91"/><rect y="16" width="18" height="18" rx="1.500" fill="#1066b8"/><text x="9" y="30.300" text-anchor="middle" class="glyph">O</text><circle cx="32" cy="12" r="11.700" fill="#60cdff"/><path d="M25.500 8.500q0-1.500 1.500-1.500h10.500q1.500 0 1.500 1.500v7q0 1.500-1.500 1.500H27q-1.500 0-1.500-1.500zm0 .500 6.800 4 6.700-4" fill="none" stroke="#0b1c2b" stroke-width="1.500"/></svg></div>
    <div class="app"><svg width="36" height="36" viewBox="0 0 36 36"><path d="M8 2h28v30q0 2-2 2H10q-2 0-2-2z" fill="#ca64ea"/><path d="M28 11h8v8h-8z" fill="#ae4bd5"/><path d="M28 19h8v7h-8z" fill="#9332bf"/><path d="M28 26h8v6q0 2-2 2h-6z" fill="#7719aa"/><rect y="9" width="18" height="18" rx="1.500" fill="#7719aa"/><text x="9" y="23.300" text-anchor="middle" class="glyph">N</text></svg></div>
    <div class="app"><svg width="36" height="34" viewBox="0 0 36 34"><circle cx="16.500" cy="17" r="16" fill="#f7941e"/><circle cx="18.500" cy="17" r="16.500" fill="#fff"/><circle cx="20" cy="17" r="16" fill="#2c2255"/><path d="M4 12.500h32M4 17h32M4 21.500h32" stroke="#fff" stroke-width="2"/></svg></div>
    <div class="app"><svg width="36" height="36" viewBox="0 0 36 36"><rect x="1" y="1" width="34" height="34" fill="#ffe100" stroke="#06263b" stroke-width="2"/><g fill="none" stroke="#26332a"><circle cx="6" cy="13" r="4.500" stroke-width="3"/><circle cx="6" cy="13" r="7" stroke-width="2" pathLength="80" stroke-dasharray="5 5"/><circle cx="12" cy="26" r="2.500" stroke-width="2.300"/><circle cx="12" cy="26" r="4.200" stroke-width="1.600" pathLength="80" stroke-dasharray="5 5"/><circle cx="26.500" cy="19.500" r="7.500" stroke-width="2.200"/><circle cx="26.500" cy="19.500" r="9" stroke-width="1.800" pathLength="80" stroke-dasharray="5 5"/><path d="M22 19l4 4 7-7.500" stroke-width="2.400"/></g></svg></div>
    <div class="app"><svg width="32" height="32" viewBox="0 0 32 32"><circle cx="16" cy="16" r="15" fill="#d64524" stroke="#fff" stroke-width="1.500"/><path d="m9 12.500 5 5-6 6.500M23 7l-5.500 6 5 5" fill="none" stroke="#fff" stroke-width="3"/></svg></div>
    <div class="app snip"><svg width="38" height="34" viewBox="0 0 38 34"><rect width="27" height="33" rx="3" fill="#eef0f1"/><path d="M3 5h16M5 3v20" fill="none" stroke="#d83b01" stroke-width="4.500" stroke-dasharray="4 1.500"/><path d="M9 27h18" stroke="#55595f" stroke-width="5"/><path d="M21 8v25" stroke="#85898f" stroke-width="4"/><circle cx="31.500" cy="23" r="3.700" fill="none" stroke="#28a8ea" stroke-width="2.300"/><circle cx="19" cy="36" r="3.500" fill="none" stroke="#28a8ea" stroke-width="2.300"/></svg></div>
  </div>
  <div class="tray">
    <svg class="up" width="17" height="11" viewBox="0 0 17 11"><path d="m1 10 7.500-8L16 10" fill="none" stroke="#1b1b1b" stroke-width="1.900"/></svg>
    <span class="lang">ENG<br>IN</span>
    <svg class="wifi" width="24" height="20" viewBox="0 0 24 20"><g fill="none" stroke="#1b1b1b" stroke-width="1.700" stroke-linecap="round"><path d="M1 7.500Q6 2 12 2t11 5.500M4.300 11Q8 7 12 7t7.700 4M7.500 14.500Q10 12 12 12t4.500 2.500"/></g><circle cx="12" cy="17.300" r="2"/></svg>
    <svg class="vol" width="26" height="22" viewBox="0 0 26 22"><g fill="none" stroke="#1b1b1b" stroke-width="1.700" stroke-linecap="round" stroke-linejoin="round"><path d="M1 8v6.500h4.500L11 19.500V2.500L5.500 8zM14.500 7.500q2 3.500 0 7M17.500 4.500q4.500 6.500 0 13M20.700 1.700q7 9.300 0 18.600"/></g></svg>
    <svg class="bat" width="26" height="20" viewBox="0 0 26 20"><rect x="1.500" y="5" width="20" height="13.500" rx="2.500" fill="none" stroke="#1b1b1b" stroke-width="1.700"/><rect x="4" y="7.500" width="15" height="8.500" rx="1"/><path d="M22.500 9.500h1q1.500 0 1.500 2.200t-1.500 2.200h-1z"/><path d="M4.500 0 .5 6.500h3L2.500 12 8 5H5z" stroke="#e0edf8" stroke-width="1"/></svg>
    <span class="clock">02:44<br>21-09-2024</span>
    <svg class="bellb" width="20" height="24" viewBox="0 0 20 24"><path d="M10 0q7.500.500 7.500 8v5.500L20 18v1H0v-1l2.500-4.500V8Q2.500.500 10 0zM6.500 20.500h7Q12.500 24 10 24t-3.500-3.500z" fill="#003e92"/></svg>
  </div>
</footer>
</body>
</html>
```

FILE: styles.css
```css
* { box-sizing: border-box; margin: 0; padding: 0; }
body {
  width: 1920px; height: 1080px; overflow: hidden;
  display: flex; flex-direction: column;
  background: #f1e2e1; color: #172b4d;
  font-family: "Open Sans", "Noto Sans", sans-serif;
  font-size: 20.400px; letter-spacing: -0.3px;
}
svg { display: block; flex: none; }
button { font: inherit; letter-spacing: inherit; color: inherit; border: 0; background: none; }
.defs { position: absolute; }

/* Browser chrome */
.titlebar { height: 50px; display: flex; align-items: center; }
.user { margin-left: 16px; }
.workspaces { margin-left: 30px; }
.title { display: flex; align-items: center; gap: 12px; margin-left: 630px; color: #1b1b1b; font-size: 18px; letter-spacing: -0.17px; white-space: nowrap; }
.winctl { display: flex; gap: 53px; margin-left: auto; margin-right: 27px; margin-top: -3px; }
.addressbar { height: 55px; padding-bottom: 3px; display: flex; align-items: center; }
.back { margin-left: 29px; }
.reload { margin-left: 40px; }
.omnibox { width: 1368px; height: 45px; margin-left: 29px; border-radius: 23px; background: #d6c8c7; box-shadow: 0 0 5px #e4d3d2; display: flex; align-items: center; }
.lock { margin-left: 29px; }
.url { margin-left: 24px; width: 1180px; font-size: 20.400px; letter-spacing: -0.27px; color: #665e5e; white-space: nowrap; }
.url b { font-weight: 400; color: #000; }
.aloud { margin-left: 5px; }
.fav { margin-left: 33px; }
.tools { display: flex; align-items: center; gap: 40px; margin-left: 28px; }
.tools svg:last-child { margin-left: -6px; }
.tools svg:nth-child(5) { margin-left: 1px; }

.middle { height: 897px; display: flex; }
.tabs { width: 77px; display: flex; flex-direction: column; }
.tab { height: 54px; width: 74px; display: flex; align-items: center; justify-content: center; }
.tab.top { height: 52px; width: 69px; padding-top: 1px; }
.dim { opacity: .45; }
.s-tile { width: 24px; height: 24px; background: #e8637b; color: #fff; font-size: 17px; font-weight: 600; line-height: 24px; text-align: center; }
.active-tile { width: 48px; height: 48px; margin: -2px 0 0 -2px; border-radius: 11px; background: #fdfafb; box-shadow: 0 2px 5px #b9a9a9; display: flex; align-items: center; justify-content: center; }
.active-tile svg { margin-left: 2px; }
.tabs-line { width: 48px; height: 2px; margin: 2px 0 0 12px; background: #8c8284; }
.newtab { margin: 18px 0 0 24px; }

.page { width: 1837px; background: #fff; border-radius: 12px; box-shadow: 0 0 3px #c9b9b9; overflow: hidden; display: flex; flex-direction: column; }

/* Jira top navigation */
.nav { height: 84px; border-bottom: 1px solid #dcdfe4; display: flex; align-items: center; color: #44546f; }
.grid { margin-left: 33px; }
.logo { margin-left: 24px; margin-top: 3px; }
.menu { display: flex; gap: 24px; height: 84px; margin: 1px 0 0 34px; font-weight: 500; }
.menu a { display: flex; align-items: center; justify-content: space-between; padding: 6px 3px 0; border-bottom: 5px solid transparent; white-space: nowrap; }
.menu svg { margin-top: -1px; }
.menu a.current { color: #0c66e4; border-color: #0c66e4; }
.w1 { width: 120px; } .w2 { width: 99px; } .w3 { width: 81px; } .w4 { width: 137px; } .w5 { width: 75px; }
.create { width: 97px; height: 48px; margin-left: 30px; padding-top: 3px; border-radius: 4px; background: #0c66e4; color: #fff; font-weight: 600; font-size: 20px; letter-spacing: -0.5px; }
.nav-right { display: flex; align-items: center; margin-left: auto; margin-right: 35px; }
.upgrade { width: 154px; height: 50px; border: 1.5px solid #8270db; border-radius: 4px; color: #1558bc; display: flex; align-items: center; gap: 12px; padding: 2px 0 0 18px; font-weight: 500; }
.upgrade svg { margin-top: -2px; }
.searchbox { width: 300px; height: 48px; margin-left: 24px; border: 1.5px solid #8590a2; border-radius: 7px; display: flex; align-items: center; gap: 12px; padding-left: 13px; color: #626f86; font-family: Roboto, "Liberation Sans", sans-serif; font-size: 20px; letter-spacing: 0.5px; }
.bell { margin-left: 20px; }
.help { margin-left: 32px; }
.cog { margin-left: 31px; }
.avatar { border-radius: 50%; background: #5243aa; color: #fff; display: flex; align-items: center; justify-content: center; font-weight: 600; }
.avatar.small { width: 36px; height: 36px; margin-left: 31px; font-size: 15.500px; }
.avatar.big { width: 48px; height: 48px; font-size: 21px; position: relative; box-shadow: 0 0 0 3px #fff; }

/* Project sidebar */
.body { flex: 1; display: flex; }
.side { width: 362px; border-right: 3px solid #ebecf0; padding: 53px 14px 0 15px; color: #44546f; }
.project { display: flex; gap: 18px; height: 36px; padding-left: 21px; }
.names { display: flex; flex-direction: column; margin-top: -3px; }
.names strong { font-size: 20.300px; line-height: 22px; font-weight: 500; color: #172b4d; }
.names span { font-size: 17.500px; line-height: 24px; color: #626f86; }
.side h4 { margin-top: 40px; height: 41px; line-height: 41px; padding-left: 25px; font-size: 17.500px; font-weight: 600; letter-spacing: -0.3px; }
.side h4.dev { margin-top: 9px; height: 43px; line-height: 43px; }
.row { display: flex; align-items: center; height: 60px; padding-left: 30px; gap: 21px; border-radius: 5px; }
.row.selected { background: #e9f2ff; color: #0c66e4; padding-left: 23px; gap: 20px; }
.row.selected::before { content: ""; width: 6px; height: 24px; margin-left: -23px; margin-right: 3px; border-radius: 0 5px 5px 0; background: #0c66e4; }
.row.add { margin-top: 12px; padding-left: 33px; gap: 27px; letter-spacing: -0.1px; }
.row.code { gap: 23px; padding-bottom: 2px; }
.side-line { height: 1px; margin: 11px -3px 0; background: #dcdfe4; }
.row.pages { margin-top: 13px; gap: 24px; color: #172b4d; }
.row.settings { margin-top: 5px; padding-left: 26px; gap: 22px; }

/* Board page */
.main { flex: 1; display: flex; flex-direction: column; }
.crumbs { height: 24px; margin: 43px 0 0 58px; line-height: 24px; display: flex; font-size: 20.200px; letter-spacing: -0.45px; color: #44546f; }
.c1 { width: 88px; letter-spacing: -0.3px; } .c2 { width: 21px; }
.headrow { height: 48px; margin: 5px 59px 0 58px; display: flex; align-items: center; justify-content: space-between; }
h1 { font-size: 34.500px; font-weight: 600; letter-spacing: -0.4px; white-space: nowrap; padding-top: 2px; }
.actions { display: flex; align-items: center; }
.days { margin-left: 11px; width: 72px; font-size: 17.700px; color: #626f86; }
.vline { width: 1px; height: 36px; margin-left: 12px; background: #dcdfe4; }
.a1 { margin-left: 26px; } .a2 { margin-left: 24px; } .a3 { margin-left: 20px; } .a4 { margin-left: 21px; }
.btn { height: 48px; border-radius: 4px; background: #f1f2f4; display: flex; align-items: center; justify-content: center; font-weight: 500; color: #172b4d; }
.btn.sq { width: 48px; color: #44546f; }
.complete { width: 189px; margin-left: 23px; font-size: 20.800px; letter-spacing: -0.15px; padding-top: 2px; }
.dk2 { margin-left: 12px; }
.filters { height: 50px; margin: 41px 59px 0 58px; display: flex; align-items: center; }
.fsearch { width: 180px; height: 50px; border: 1.5px solid #8590a2; border-radius: 6px; display: flex; align-items: center; gap: 9px; padding: 1px 0 0 14px; color: #626f86; }
.fsearch svg { color: #44546f; }
.people { display: flex; margin-left: 24px; }
.p2 { margin-left: -3px; } .p3 { margin-left: 15px; }
.epic { margin-left: 36px; width: 43px; font-weight: 500; padding-top: 1px; }
.epic-c { margin: 1px 0 0 13px; color: #44546f; }
.fright { display: flex; align-items: center; margin-left: auto; }
.group { font-size: 16px; color: #626f86; width: 88px; white-space: nowrap; padding-top: 2px; }
.none { width: 125px; gap: 19px; padding: 1px 4px 0 0; font-size: 21px; }
.none svg { color: #44546f; }
.m1 { margin-left: 6px; } .m2 { margin-left: 7px; } .m3 { margin-left: 12px; }

.board { position: relative; width: 1311px; height: 366px; margin: 53px 0 0 55px; display: flex; gap: 18px; overflow: hidden; }
.col { flex: none; width: 405px; background: #f7f8f9; border-radius: 9px; padding: 0 7px 0 8px; }
.col h3 { height: 81px; padding: 0 16px 9px; display: flex; align-items: center; gap: 26px; font-size: 17.800px; font-weight: 600; letter-spacing: -0.3px; color: #626f86; }
.card { position: relative; background: #fff; border-radius: 5px; box-shadow: 0 1.5px 1.5px #a9b0be, 0 0 2px #c3c8d1; padding: 19px 18px 21px; }
.card p { line-height: 30px; white-space: nowrap; margin-bottom: 11px; font-size: 20.600px; letter-spacing: -0.33px; }
.card p.tight { letter-spacing: -0.45px; }
.tag { display: block; width: 99px; height: 24px; line-height: 26px; border-radius: 4px; background: #dfd8fd; color: #5e4db2; font-size: 16.700px; font-weight: 700; text-align: center; letter-spacing: -0.5px; }
.foot { display: flex; align-items: center; height: 36px; margin-top: 15px; padding-right: 3px; }
.st { margin: 4px 0 0 1px; }
.key { margin-left: 7px; margin-right: auto; padding-bottom: 2px; font-size: 18.200px; font-weight: 500; letter-spacing: -0.1px; color: #44546f; }
.key.done { text-decoration: line-through; }
.pts { width: 28px; height: 24px; margin-right: 12px; border-radius: 12px; background: #f1f2f4; line-height: 25px; text-align: center; font-size: 16.500px; }
.ok { margin-right: 9px; }
.more { position: absolute; right: 12px; top: 12px; }
.newissue { display: flex; align-items: center; gap: 8px; padding: 20px 0 0 15px; font-size: 20.700px; font-weight: 500; letter-spacing: -0.3px; }
.newissue svg { margin-top: -2px; }
.addcol { flex: none; margin-left: -6px; }
.fade { position: absolute; right: 0; top: 0; width: 18px; height: 366px; background: linear-gradient(to right, rgba(9,30,66,0), rgba(9,30,66,.04) 50%, rgba(9,30,66,.13)); mask-image: linear-gradient(to bottom, #000 345px, transparent 366px); }
.scroll { margin-top: auto; height: 23px; background: #fcfcfc; display: flex; align-items: center; padding: 0 11px 0 10px; }
.thumb { width: 1399px; height: 13px; margin: 0 21px 0 12px; border-radius: 7px; background: #8a8a8a; }

/* Windows taskbar */
.taskbar { margin-top: 6px; height: 72px; border-top: 2px solid #aeb4c2; display: flex; align-items: center; padding-bottom: 2px; color: #1b1b1b;
  background: linear-gradient(to right, #e0eef7, #e2ebf4 300px, #d3dff6 470px, #d8dded 620px, #d3dff6 750px, #d9dcec 1000px, #d4e0f4 1220px, #d8dced 1370px, #e0ebf6 1560px, #e0eef8); }
.widgets { margin-left: 30px; }
.start { margin-left: 182px; }
.tsearch { width: 328px; height: 48px; margin-left: 21px; border-radius: 24px; border: 1px solid #c5cee0; border-bottom: 2px solid #b0bace; background: #f5f8fe; display: flex; align-items: center; gap: 15px; padding: 1px 0 0 15px; color: #5d5d60; font-size: 20px; }
.apps { display: flex; margin-left: 3.500px; height: 70px; }
.app { width: 66px; height: 70px; display: flex; align-items: center; justify-content: center; position: relative; }
.outlook { margin: -6px -8px 0 0; }
.app.on::after, .app.active::after { content: ""; position: absolute; bottom: 6px; left: 29px; width: 9px; height: 5px; border-radius: 3px; background: #7d828c; }
.app.active::after { left: 22px; width: 22px; background: #0078d4; }
.app.active::before { content: ""; position: absolute; left: 5px; top: 6px; width: 56px; height: 58px; border-radius: 6px; background: #ecf0fa; box-shadow: 0 1px 2px #b8c0d4; }
.app.active svg { position: relative; }
.snip svg { margin: 40px 0 0 0; overflow: visible; }
.glyph { fill: #fff; font-size: 16px; font-weight: 700; }
.tray { display: flex; align-items: center; margin-left: auto; margin-right: 32px; font-size: 18px; letter-spacing: -0.15px; line-height: 23px; }
.lang { width: 42px; margin-left: 27px; text-align: center; }
.wifi { margin-left: 24px; } .vol { margin-left: 11px; } .bat { margin-left: 10px; }
.clock { width: 110px; margin-left: 7px; text-align: right; white-space: nowrap; }
.bellb { margin-left: 13px; }
```
